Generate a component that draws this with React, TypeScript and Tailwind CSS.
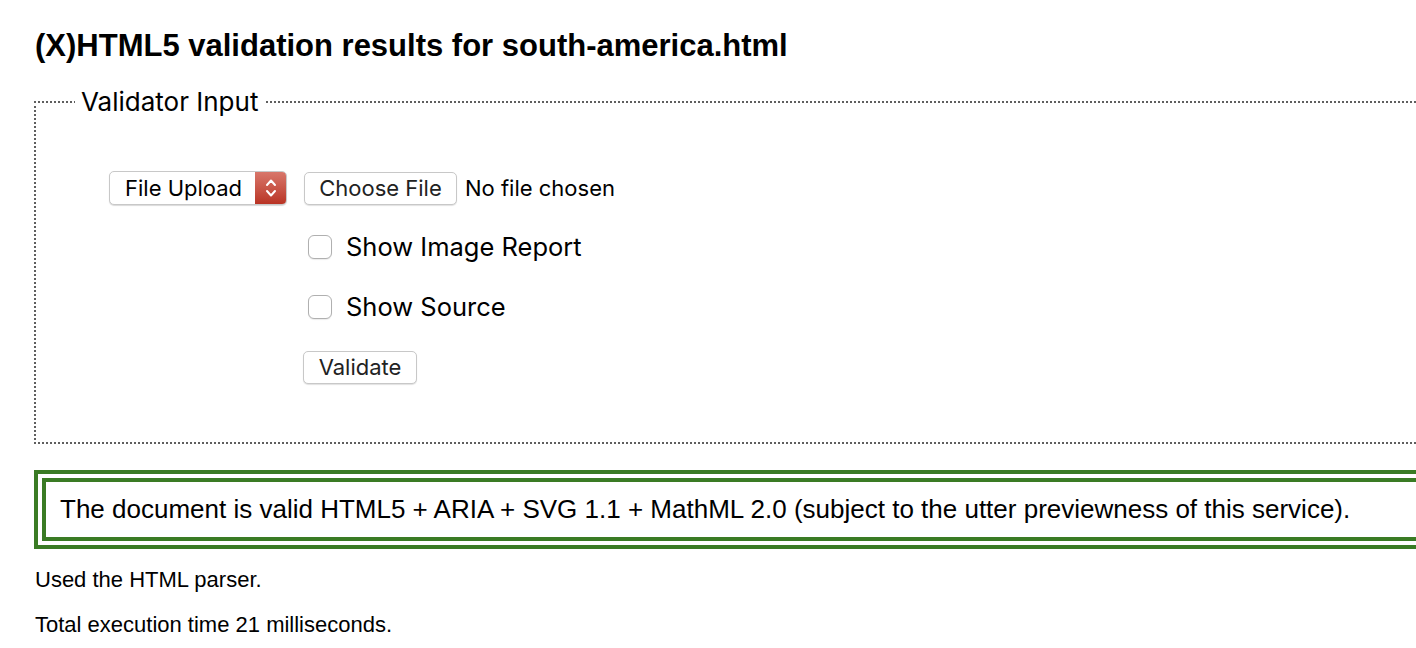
import React from "react";

const ui = "font-['Inter','Noto_Sans',sans-serif]";

function SelectBox() {
  return (
    <div className="flex h-[34px] w-[178px] items-stretch overflow-hidden rounded-[5px] border border-[#c8c8c8] bg-white shadow-[0_1px_1px_rgba(0,0,0,0.15)]">
      <span className="flex flex-1 items-center pl-[15px] text-[22px] text-black">
        File Upload
      </span>
      <span className="flex w-[31px] items-center justify-center bg-gradient-to-b from-[#d8766a] to-[#b93324]">
        <svg width="12" height="22" viewBox="0 0 12 22" fill="none">
          <path d="M2 8l4-4.5 4 4.5M2 14l4 4.5 4-4.5" stroke="white" strokeWidth="2" strokeLinecap="round" strokeLinejoin="round" />
        </svg>
      </span>
    </div>
  );
}

function PushButton({ children, className }: { children: React.ReactNode; className?: string }) {
  return (
    <button
      className={
        "flex h-[33px] items-center justify-center rounded-[5px] border border-[#c8c8c8] bg-white text-[22px] text-[#222] shadow-[0_1px_1px_rgba(0,0,0,0.12)] " +
        (className ?? "")
      }
    >
      {children}
    </button>
  );
}

function CheckRow({ label }: { label: string }) {
  return (
    <label className="flex h-[24px] items-center">
      <span className="ml-[4px] h-[24px] w-[24px] rounded-[6px] border border-[#b0b0b0] bg-white shadow-[0_1px_1px_rgba(0,0,0,0.08)]" />
      <span className="ml-[14px] text-[25.5px] text-black">{label}</span>
    </label>
  );
}

export default function App() {
  return (
    <div className="h-[648px] w-[1416px] overflow-hidden bg-white">
      <div className="w-[1500px] pl-[34px] pt-[28px] font-['Liberation_Sans',Arial,sans-serif] text-black">
        <h1 className="ml-[1px] text-[31px] font-bold leading-[36px]">
          (X)HTML5 validation results for south-america.html
        </h1>

        <fieldset className="mt-[25px] h-[355px] border-2 border-dotted border-[#5f5f5f]">
          <legend className={"ml-[39px] px-[6px] text-[26px] leading-[26px] " + ui}>
            Validator Input
          </legend>
          <div className={"pl-[73px] pt-[56px] " + ui}>
            <div className="flex items-center">
              <SelectBox />
              <PushButton className="ml-[17px] w-[153px]">Choose File</PushButton>
              <span className="ml-[8px] text-[22px]">No file chosen</span>
            </div>
            <div className="ml-[195px] flex flex-col items-start">
              <div className="mt-[30px]">
                <CheckRow label="Show Image Report" />
              </div>
              <div className="mt-[36px]">
                <CheckRow label="Show Source" />
              </div>
              <PushButton className="mt-[32px] -ml-[1px] w-[114px]">Validate</PushButton>
            </div>
          </div>
        </fieldset>

        <div className="mt-[26px] border-4 border-[#3a7b24] p-[4px]">
          <div className="border-4 border-[#3a7b24] py-[12px] pl-[14px] text-[26px] leading-[31px]">
            The document is valid HTML5 + ARIA + SVG 1.1 + MathML 2.0 (subject to the utter previewness of this service).
          </div>
        </div>

        <p className="ml-[1px] mt-[18px] text-[22px] leading-[26px]">Used the HTML parser.</p>
        <p className="ml-[1px] mt-[19px] text-[22px] leading-[26px]">Total execution time 21 milliseconds.</p>
      </div>
    </div>
  );
}
